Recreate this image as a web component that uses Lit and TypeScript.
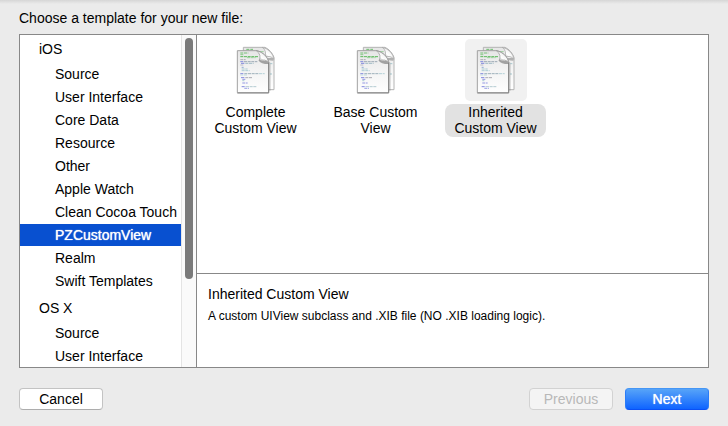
import { LitElement, html, css, svg } from "lit";
import { customElement, state } from "lit/decorators.js";
import { classMap } from "lit/directives/class-map.js";

const GROUPS = [
  {
    name: "iOS",
    items: [
      "Source",
      "User Interface",
      "Core Data",
      "Resource",
      "Other",
      "Apple Watch",
      "Clean Cocoa Touch",
      "PZCustomView",
      "Realm",
      "Swift Templates",
    ],
  },
  { name: "OS X", items: ["Source", "User Interface"] },
];

const TEMPLATES = [
  { name: "Complete Custom View", lines: ["Complete", "Custom View"] },
  { name: "Base Custom View", lines: ["Base Custom", "View"] },
  { name: "Inherited Custom View", lines: ["Inherited", "Custom View"] },
];

/* Code marks on the page: x, y, width, colour */
const MARKS: [number, number, number, string][] = [
  [46, 45, 24, "#5fb75f"],
  [46, 50, 10, "#7cc47c"],
  [46, 56, 54, "#3fae3f"],
  [66, 59, 26, "#8ccb8c"],
  [46, 65, 16, "#a0a0aa"],
  [46, 71, 10, "#6a72d8"],
  [57, 71, 40, "#8b9aa8"],
  [48, 76, 12, "#6a72d8"],
  [61, 76, 25, "#8fb0bd"],
  [46, 81, 9, "#b0b0c0"],
  [50, 88, 6, "#7f9fd0"],
  [50, 93, 18, "#9cc4cc"],
  [50, 98, 24, "#9cc4cc"],
  [46, 107, 10, "#6a72d8"],
  [58, 107, 42, "#8aa2ae"],
  [102, 107, 17, "#a5c9d0"],
  [46, 111, 22, "#b5d3d8"],
  [48, 119, 12, "#6a72d8"],
  [61, 119, 22, "#9a9aa4"],
  [52, 124, 10, "#7f86dd"],
  [52, 128, 6, "#9cc4cc"],
  [52, 135, 16, "#7f86dd"],
  [50, 146, 12, "#6a72d8"],
  [63, 146, 32, "#a5c0c8"],
  [58, 151, 14, "#8a90e0"],
];

@customElement("file-icon")
class FileIcon extends LitElement {
  static styles = css`
    :host {
      display: block;
      width: 62px;
      height: 62px;
    }
    svg {
      display: block;
    }
  `;

  render() {
    return html`<svg width="62" height="62" viewBox="0 3 186 186" aria-hidden="true">
      <defs>
        <linearGradient id="paper" x1="0" y1="0" x2="0" y2="1">
          <stop offset="0" stop-color="#e6e6e6" />
          <stop offset="0.5" stop-color="#f4f4f4" />
          <stop offset="1" stop-color="#ffffff" />
        </linearGradient>
        <linearGradient id="curl" x1="0" y1="1" x2="0.8" y2="0">
          <stop offset="0" stop-color="#808080" />
          <stop offset="0.25" stop-color="#b4b4b4" />
          <stop offset="0.45" stop-color="#ffffff" />
          <stop offset="0.75" stop-color="#f0f0f0" />
          <stop offset="1" stop-color="#b8b8b8" />
        </linearGradient>
      </defs>
      <path d="M55 28H120Q138 36 147 58V155H55Z" fill="url(#paper)" stroke="#b4b4b4" stroke-width="3" />
      <path d="M64 34H84" stroke="#6dbd6d" stroke-width="3" stroke-dasharray="9 3" />
      <path d="M84 41H116" stroke="#9acd9a" stroke-width="3" />
      <path d="M136 77h6M135 108h6" stroke="#a5c9d0" stroke-width="3" />
      <path d="M119 60Q126 68 145 68V60Z" fill="#666" opacity="0.45" />
      <path d="M112 28Q127 40 119 58Q136 50 147 64Q142 36 112 28Z" fill="url(#curl)" stroke="#a0a0a0" stroke-width="2" />
      <path d="M131 72V158H137V74Z" fill="#777" opacity="0.3" />
      <path d="M37 38H98Q122 46 131 70V164H37Z" fill="url(#paper)" stroke="#a2a2a2" stroke-width="3" />
      <path d="M131 72V165H37" fill="none" stroke="#868686" stroke-width="3" />
      ${MARKS.map(
        ([x, y, w, c]) => svg`<path d=${`M${x} ${y}h${w}`} stroke=${c} stroke-width="2.5" stroke-dasharray="9 2" />`
      )}
      <path d="M102 68Q108 78 130 78V68Z" fill="#555" opacity="0.5" />
      <path d="M94 38Q111 50 102 69Q121 61 131 74Q126 46 94 38Z" fill="url(#curl)" stroke="#929292" stroke-width="2" />
    </svg>`;
  }
}

@customElement("app-root")
class AppRoot extends LitElement {
  @state() category = "iOS/PZCustomView";
  @state() template = 2;

  static styles = css`
    :host {
      display: flex;
      flex-direction: column;
      box-sizing: border-box;
      min-height: 100vh;
      padding: 7px 19px 16px;
      background: linear-gradient(#d6d6d6, #ebebeb 4px);
      color: #000;
      font: 14px/22px "Liberation Sans", Arial, sans-serif;
    }
    button {
      margin: 0;
      padding: 0;
      border: 0;
      background: none;
      color: inherit;
      font: inherit;
      text-align: left;
    }
    h1,
    h2,
    h3,
    p {
      margin: 0;
      font: inherit;
    }
    h1 {
      height: 27px;
    }
    .panel {
      flex: 1;
      display: grid;
      grid-template-columns: 177px 1fr;
      min-height: 0;
      border: 1px solid #888;
      background: #fff;
    }
    .sidebar {
      display: flex;
      border-right: 1px solid #888;
    }
    .groups {
      flex: 1;
      display: flex;
      flex-direction: column;
      gap: 2px;
    }
    .group {
      display: flex;
      flex-direction: column;
      gap: 1px;
    }
    .group h2 {
      box-sizing: border-box;
      height: 27px;
      padding: 3px 0 0 19px;
    }
    .item {
      height: 22px;
      padding-left: 35px;
      white-space: nowrap;
    }
    .item.selected {
      background: #0850d0;
      color: #fff;
      text-shadow: 0 0 1px #fff;
    }
    .track {
      width: 15px;
      box-sizing: border-box;
      padding: 3px 3px 0;
      border-left: 1px solid #e4e4e4;
      background: #fafafa;
    }
    .thumb {
      width: 8px;
      height: 241px;
      border-radius: 4px;
      background: #7a7a7a;
    }
    .main {
      display: grid;
      grid-template-rows: 1fr 94px;
    }
    .templates {
      display: flex;
      align-items: flex-start;
      gap: 19px;
      padding: 4px 8px;
    }
    .template {
      display: flex;
      flex-direction: column;
      align-items: center;
      gap: 3px;
      width: 101px;
    }
    .picture {
      border-radius: 5px;
    }
    .label {
      width: 100%;
      padding-bottom: 1px;
      border-radius: 8px;
      line-height: 16px;
      text-align: center;
    }
    .line {
      display: block;
    }
    .selected .picture {
      background: #f1f1f1;
    }
    .selected .label {
      background: #e2e2e2;
    }
    .details {
      padding: 9px 11px;
      border-top: 1px solid #888;
    }
    .details p {
      font-size: 12px;
    }
    footer {
      display: flex;
      gap: 12px;
      margin-top: 20px;
    }
    .push {
      box-sizing: border-box;
      width: 84px;
      height: 22px;
      border: 1px solid #c3c3c3;
      border-bottom-color: #adadad;
      border-radius: 4px;
      background: #fff;
      line-height: 20px;
      text-align: center;
    }
    .spacer {
      flex: 1;
    }
    .push:disabled {
      border-color: #d2d2d2;
      background: #f4f4f4;
      color: #b8b8b8;
    }
    .push.primary {
      border-color: #4596f5 #2a7cf8 #0a50f5;
      background: linear-gradient(#57a4f8, #0f64ff);
      color: #fff;
      text-shadow: 0 0 1px #fff;
    }
  `;

  render() {
    return html`
      <h1>Choose a template for your new file:</h1>
      <div class="panel">
        <div class="sidebar">
          <nav class="groups" aria-label="Template categories">
            ${GROUPS.map(
              (g) => html`<section class="group">
                <h2>${g.name}</h2>
                ${g.items.map((item) => {
                  const key = `${g.name}/${item}`;
                  return html`<button
                    class=${classMap({ item: true, selected: key === this.category })}
                    @click=${() => (this.category = key)}
                  >${item}</button>`;
                })}
              </section>`
            )}
          </nav>
          <div class="track"><div class="thumb"></div></div>
        </div>
        <div class="main">
          <div class="templates">
            ${TEMPLATES.map(
              (t, i) => html`<button
                class=${classMap({ template: true, selected: i === this.template })}
                @click=${() => (this.template = i)}
              >
                <file-icon class="picture"></file-icon>
                <span class="label">${t.lines.map((l) => html`<span class="line">${l}</span>`)}</span>
              </button>`
            )}
          </div>
          <div class="details">
            <h3>${TEMPLATES[this.template].name}</h3>
            <p>A custom UIView subclass and .XIB file (NO .XIB loading logic).</p>
          </div>
        </div>
      </div>
      <footer>
        <button class="push">Cancel</button>
        <span class="spacer"></span>
        <button class="push" disabled>Previous</button>
        <button class="push primary">Next</button>
      </footer>
    `;
  }
}
